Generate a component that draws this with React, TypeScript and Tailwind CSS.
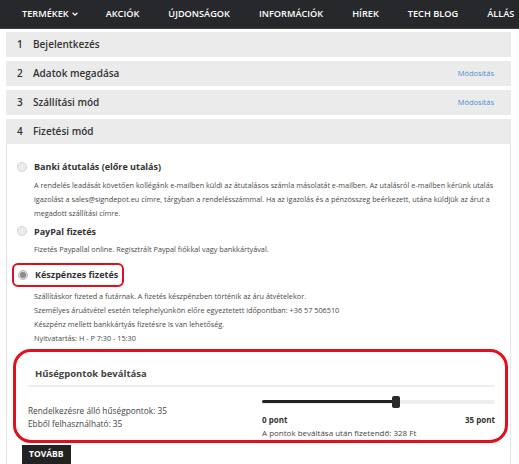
import React from 'react';

const navItems = ['AKCIÓK', 'ÚJDONSÁGOK', 'INFORMÁCIÓK', 'HÍREK', 'TECH BLOG', 'ÁLLÁS'];

const StepHeader: React.FC<{ num: number; title: string; edit?: boolean }> = ({ num, title, edit }) => (
  <div className="flex h-[25px] items-center bg-[#ebebeb] pl-[11px] pr-[17px] text-[10px] font-semibold text-[#333]">
    <span className="w-[16px]">{num}</span>
    <span>{title}</span>
    {edit && <span className="ml-auto text-[7.5px] font-normal text-[#4a8fd4]">Módosítás</span>}
  </div>
);

const Radio: React.FC<{ checked?: boolean }> = ({ checked }) => (
  <span
    className={
      checked
        ? 'flex h-[10px] w-[10px] items-center justify-center rounded-full border border-[#bdbdbd] bg-[#d9d9d9]'
        : 'h-[10px] w-[10px] rounded-full border border-[#d4d4d4] bg-[#ececec]'
    }
  >
    {checked && <span className="h-[6px] w-[6px] rounded-full bg-[#8a8a8a]" />}
  </span>
);

export default function App() {
  return (
    <div className="h-[464px] w-[519px] overflow-hidden bg-white" style={{ fontFamily: '"Open Sans", "Liberation Sans", sans-serif' }}>
      <nav className="flex h-[29px] items-center whitespace-nowrap border-b border-[#3d3f43] bg-[#26282b] pl-[22px] text-[9.2px] font-semibold text-white">
        <span className="flex items-center gap-[2px]">
          TERMÉKEK
          <svg width="8" height="8" viewBox="0 0 10 10" className="mt-[1px]">
            <path d="M2 3.5 L5 6.5 L8 3.5" fill="none" stroke="white" strokeWidth="1.6" />
          </svg>
        </span>
        <div className="ml-[27px] flex gap-[29px]">
          {navItems.map((n) => (
            <span key={n}>{n}</span>
          ))}
        </div>
      </nav>

      <div className="ml-[6px] mr-[8px] mt-[3px] flex flex-col gap-[4px]">
        <StepHeader num={1} title="Bejelentkezés" />
        <StepHeader num={2} title="Adatok megadása" edit />
        <StepHeader num={3} title="Szállítási mód" edit />
        <div>
          <StepHeader num={4} title="Fizetési mód" />
          <div className="h-[330px] border-x border-[#e6e6e6] px-[10px] pt-[16px] text-[#333]">
            <div className="flex items-center gap-[7px] text-[9px] font-bold">
              <Radio />
              Banki átutalás (előre utalás)
            </div>
            <p className="mt-[4px] pl-[17px] text-[7.3px] leading-[14px] text-[#4a4a4a]">
              A rendelés leadását követően kollégánk e-mailben küldi az átutalásos számla másolatát e-mailben. Az utalásról e-mailben kérünk utalás
              igazolást a sales@signdepot.eu címre, tárgyban a rendelésszámmal. Ha az igazolás és a pénzösszeg beérkezett, utána küldjük az árut a
              megadott szállítási címre.
            </p>

            <div className="mt-[5px] flex items-center gap-[7px] text-[9px] font-bold">
              <Radio />
              PayPal fizetés
            </div>
            <p className="mt-[4px] pl-[17px] text-[7.3px] leading-[14px] text-[#4a4a4a]">
              Fizetés Paypallal online. Regisztrált Paypal fiókkal vagy bankkártyával.
            </p>

            <div className="-ml-[5px] mt-[7px] inline-flex items-center gap-[7px] rounded-[6px] border-2 border-[#e0101e] px-[4px] py-[3px] text-[9px] font-bold">
              <Radio checked />
              Készpénzes fizetés
            </div>
            <p className="mt-[2px] pl-[17px] text-[7.3px] leading-[14px] text-[#4a4a4a]">
              Szállításkor fizeted a futárnak. A fizetés készpénzben történik az áru átvételekor.
              <br />
              Személyes áruátvétel esetén telephelyünkön előre egyeztetett időpontban: +36 57 506510
              <br />
              Készpénz mellett bankkártyás fizetésre is van lehetőség.
              <br />
              Nyitvatartás: H - P 7:30 - 15:30
            </p>

            <div className="-ml-[4px] mr-[-8px] mt-[4px] rounded-[18px] border-[3px] border-[#e0101e] pb-[1px] pl-[12px] pr-[10px] pt-[15px]">
              <div className="border-b-2 border-[#eeeeee] pb-[4px] pl-[7px] text-[9.5px] font-bold text-[#444]">Hűségpontok beváltása</div>
              <div className="mt-[9px] flex">
                <div className="w-[234px] pt-[8px] text-[8.3px] leading-[13px] text-[#444]">
                  <div>Rendelkezésre álló hűségpontok: 35</div>
                  <div>Ebből felhasználható: 35</div>
                </div>
                <div className="flex-1">
                  <div className="relative h-[12px]">
                    <div className="absolute left-0 right-0 top-[4px] h-[4px] rounded-full bg-[#eeeeee]" />
                    <div className="absolute left-0 top-[4px] h-[3px] w-[134px] rounded-full bg-[#222]" />
                    <div className="absolute left-[130px] top-0 h-[12px] w-[8px] rounded-[2px] bg-[#2a2a2a]" />
                  </div>
                  <div className="mt-[6px] flex justify-between text-[8px] font-bold text-[#333]">
                    <span>0 pont</span>
                    <span>35 pont</span>
                  </div>
                  <div className="mt-[1px] text-[8px] leading-[12px] text-[#444]">A pontok beváltása után fizetendő: 328 Ft</div>
                </div>
              </div>
            </div>

            <button className="ml-[5px] mt-[2px] flex h-[19px] items-center bg-[#222] px-[7px] text-[8.5px] font-bold text-white">TOVÁBB</button>
          </div>
        </div>
      </div>
    </div>
  );
}
